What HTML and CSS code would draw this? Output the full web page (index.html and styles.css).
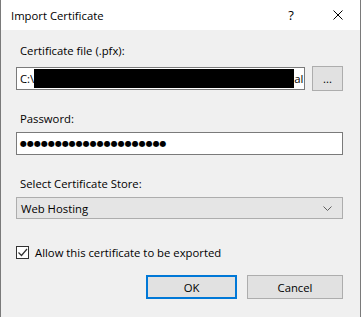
FILE: index.html
```html
<!DOCTYPE html>
<html>
<head>
<meta charset="utf-8">
<link rel="stylesheet" href="styles.css">
</head>
<body>
<div class="window">
  <div class="titlebar">
    <span class="title">Import Certificate</span>
    <div class="caption">
      <span class="cap-btn help">?</span>
      <span class="cap-btn close">
        <svg width="10" height="10" viewBox="0 0 10 10"><path d="M0.5 0.5 L9.5 9.5 M9.5 0.5 L0.5 9.5" stroke="#000" stroke-width="1" fill="none"/></svg>
      </span>
    </div>
  </div>
  <div class="content">
    <div class="label l1">Certificate file (.pfx):</div>
    <div class="row-file">
      <div class="textbox file"><span class="val">C:\</span><span class="redact"></span><span class="tail">al</span></div>
      <div class="btn browse">...</div>
    </div>
    <div class="label l2">Password:</div>
    <div class="textbox pwd"><span class="dots">●●●●●●●●●●●●●●●●●●●●●</span></div>
    <div class="label l3">Select Certificate Store:</div>
    <div class="combo">
      <span class="combo-val">Web Hosting</span>
      <svg class="chev" width="9" height="5" viewBox="0 0 9 5"><path d="M0.5 0.5 L4.5 4.5 L8.5 0.5" stroke="#606060" stroke-width="1" fill="none"/></svg>
    </div>
    <div class="check-row">
      <span class="checkbox"><svg width="11" height="11" viewBox="0 0 11 11"><path d="M1.5 5.5 L4.5 8.5 L10 2" stroke="#333" stroke-width="1.2" fill="none"/></svg></span>
      <span class="check-label">Allow this certificate to be exported</span>
    </div>
    <div class="buttons">
      <div class="btn ok">OK</div>
      <div class="btn cancel">Cancel</div>
    </div>
  </div>
</div>
</body>
</html>
```
FILE: styles.css
```css
html, body {
  margin: 0;
  padding: 0;
}
body {
  font-family: "Open Sans", "Noto Sans", sans-serif;
  font-size: 11.3px;
  color: #000;
}
.window {
  width: 361px;
  height: 317px;
  box-sizing: border-box;
  border-left: 1px solid #7a7a7a;
  border-right: 1px solid #7a7a7a;
  background: #f0f0f0;
  display: flex;
  flex-direction: column;
  overflow: hidden;
}
.titlebar {
  height: 30px;
  background: #fff;
  display: flex;
  align-items: center;
  padding-left: 10px;
}
.caption {
  margin-left: auto;
  display: flex;
  height: 30px;
  margin-right: -1px;
}
.cap-btn {
  width: 46px;
  height: 30px;
  display: flex;
  align-items: center;
  justify-content: center;
}
.help {
  font-size: 13px;
  padding-right: 2px;
  box-sizing: border-box;
}
.content {
  padding: 0 17px 0 15px;
  display: flex;
  flex-direction: column;
}
.label {
  padding-left: 4px;
  line-height: 16px;
}
.l1 { margin-top: 13px; }
.l2 { margin-top: 20px; }
.l3 { margin-top: 21px; }
.row-file {
  display: flex;
  margin-top: 7px;
  align-items: center;
}
.textbox {
  height: 23px;
  box-sizing: border-box;
  border: 1px solid #7a7a7a;
  background: #fff;
  display: flex;
  align-items: center;
  padding-left: 3px;
  overflow: hidden;
  white-space: nowrap;
}
.file {
  width: 289px;
}
.redact {
  display: inline-block;
  width: 260px;
  height: 19px;
  background: #000;
  flex: none;
}
.btn {
  box-sizing: border-box;
  background: #e1e1e1;
  border: 1px solid #adadad;
  display: flex;
  align-items: center;
  justify-content: center;
}
.browse {
  width: 31px;
  height: 25px;
  margin-left: 7px;
  align-items: flex-end;
  padding-bottom: 5px;
  line-height: 12px;
}
.pwd {
  margin-top: 5px;
  width: 327px;
}
.dots {
  font-family: "DejaVu Sans", sans-serif;
  font-size: 8px;
  letter-spacing: 0;
}
.combo {
  margin-top: 5px;
  width: 327px;
  height: 22px;
  box-sizing: border-box;
  border: 1px solid #adadad;
  background: #e5e5e5;
  display: flex;
  align-items: center;
  padding: 0 10px 0 4px;
}
.combo-val { flex: 1; }
.check-row {
  margin-top: 26px;
  display: flex;
  align-items: center;
}
.checkbox {
  width: 13px;
  height: 13px;
  box-sizing: border-box;
  border: 1px solid #333;
  background: #fff;
  display: flex;
  align-items: center;
  justify-content: center;
}
.check-label {
  margin-left: 6px;
}
.buttons {
  margin-top: 15px;
  display: flex;
  justify-content: flex-end;
  gap: 10px;
}
.ok, .cancel {
  height: 24px;
}
.ok {
  width: 91px;
  border: 2px solid #0078d7;
}
.cancel {
  width: 96px;
}
```
